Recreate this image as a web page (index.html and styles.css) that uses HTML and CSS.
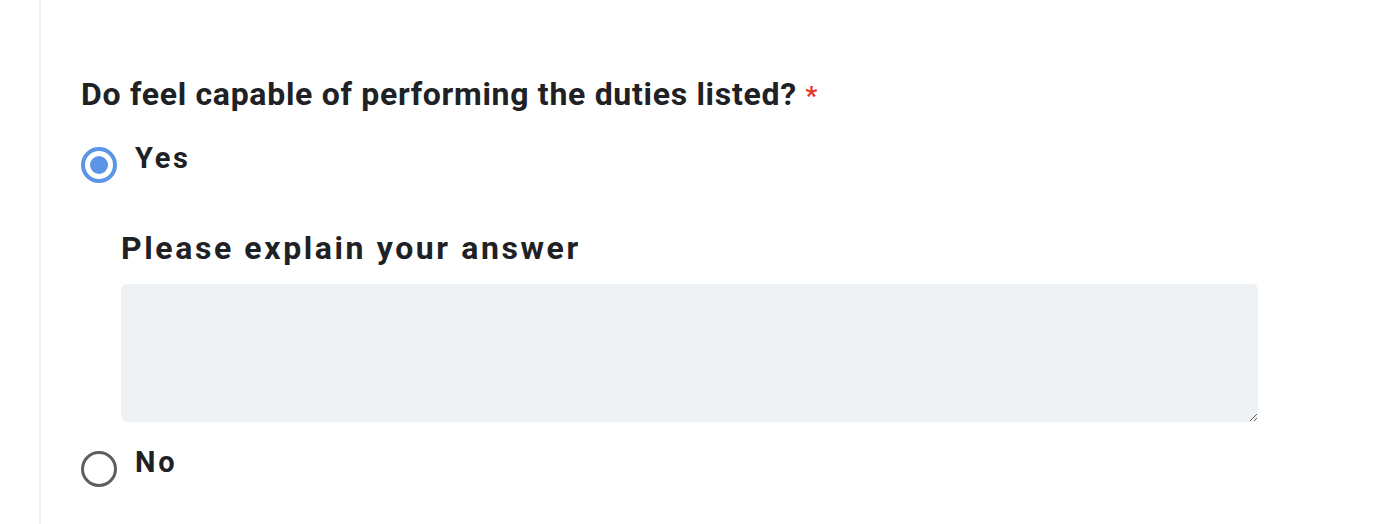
FILE: index.html
```html
<!DOCTYPE html>
<html lang="en">
<head>
  <meta charset="UTF-8" />
  <meta name="viewport" content="width=device-width, initial-scale=1.0" />
  <title>Question</title>
  <link rel="stylesheet" href="styles.css">
</head>
<body>
  <div class="page">
    <div class="question">
      <h2 class="question-title">Do feel capable of performing the duties listed? <span class="required">*</span></h2>

      <label class="option">
        <input type="radio" name="capable" value="yes" checked />
        <span class="option-label">Yes</span>
      </label>

      <div class="followup">
        <label class="followup-label" for="explain">Please explain your answer</label>
        <textarea id="explain" class="followup-input"></textarea>
      </div>

      <label class="option">
        <input type="radio" name="capable" value="no" />
        <span class="option-label">No</span>
      </label>
    </div>
  </div>
</body>
</html>
```

FILE: styles.css
```css
body {
  margin: 0;
  font-family: Roboto, "Liberation Sans", sans-serif;
  color: #202124;
  background: white;
}

.page {
  margin-left: 39px;
  border-left: 2px solid #f1f1f3;
  min-height: 524px;
  padding: 74px 0 0 40px;
  box-sizing: border-box;
}

.question-title {
  margin: 0 0 26px;
  font-size: 32px;
  font-weight: 700;
  letter-spacing: 0.7px;
  line-height: 40px;
}

.required {
  color: #e5372c;
  font-size: 26px;
  line-height: 1;
  letter-spacing: 0;
}

.option {
  display: flex;
  align-items: flex-start;
  gap: 18px;
  cursor: pointer;
}

.option input {
  appearance: none;
  margin: 7px 0 0;
  width: 36px;
  height: 36px;
  border: 3px solid #5f5f5f;
  border-radius: 50%;
  box-sizing: border-box;
  flex: none;
  position: relative;
}

.option input:checked {
  border: 4px solid #5a95e6;
}

.option input:checked::after {
  content: "";
  position: absolute;
  left: 5px;
  top: 5px;
  width: 18px;
  height: 18px;
  border-radius: 50%;
  background: #5a95e6;
}

.option-label {
  font-size: 29px;
  font-weight: 700;
  letter-spacing: 2.7px;
  line-height: 36px;
}

.followup {
  padding: 45px 0 22px 40px;
}

.followup-label {
  display: block;
  font-size: 32px;
  font-weight: 700;
  letter-spacing: 2.6px;
  line-height: 40px;
  margin-bottom: 16px;
}

.followup-input {
  display: block;
  width: 1137px;
  height: 138px;
  border: none;
  border-radius: 6px;
  background: #eef2f5;
  box-sizing: border-box;
  padding: 12px;
  font: inherit;
  font-size: 20px;
}
```
